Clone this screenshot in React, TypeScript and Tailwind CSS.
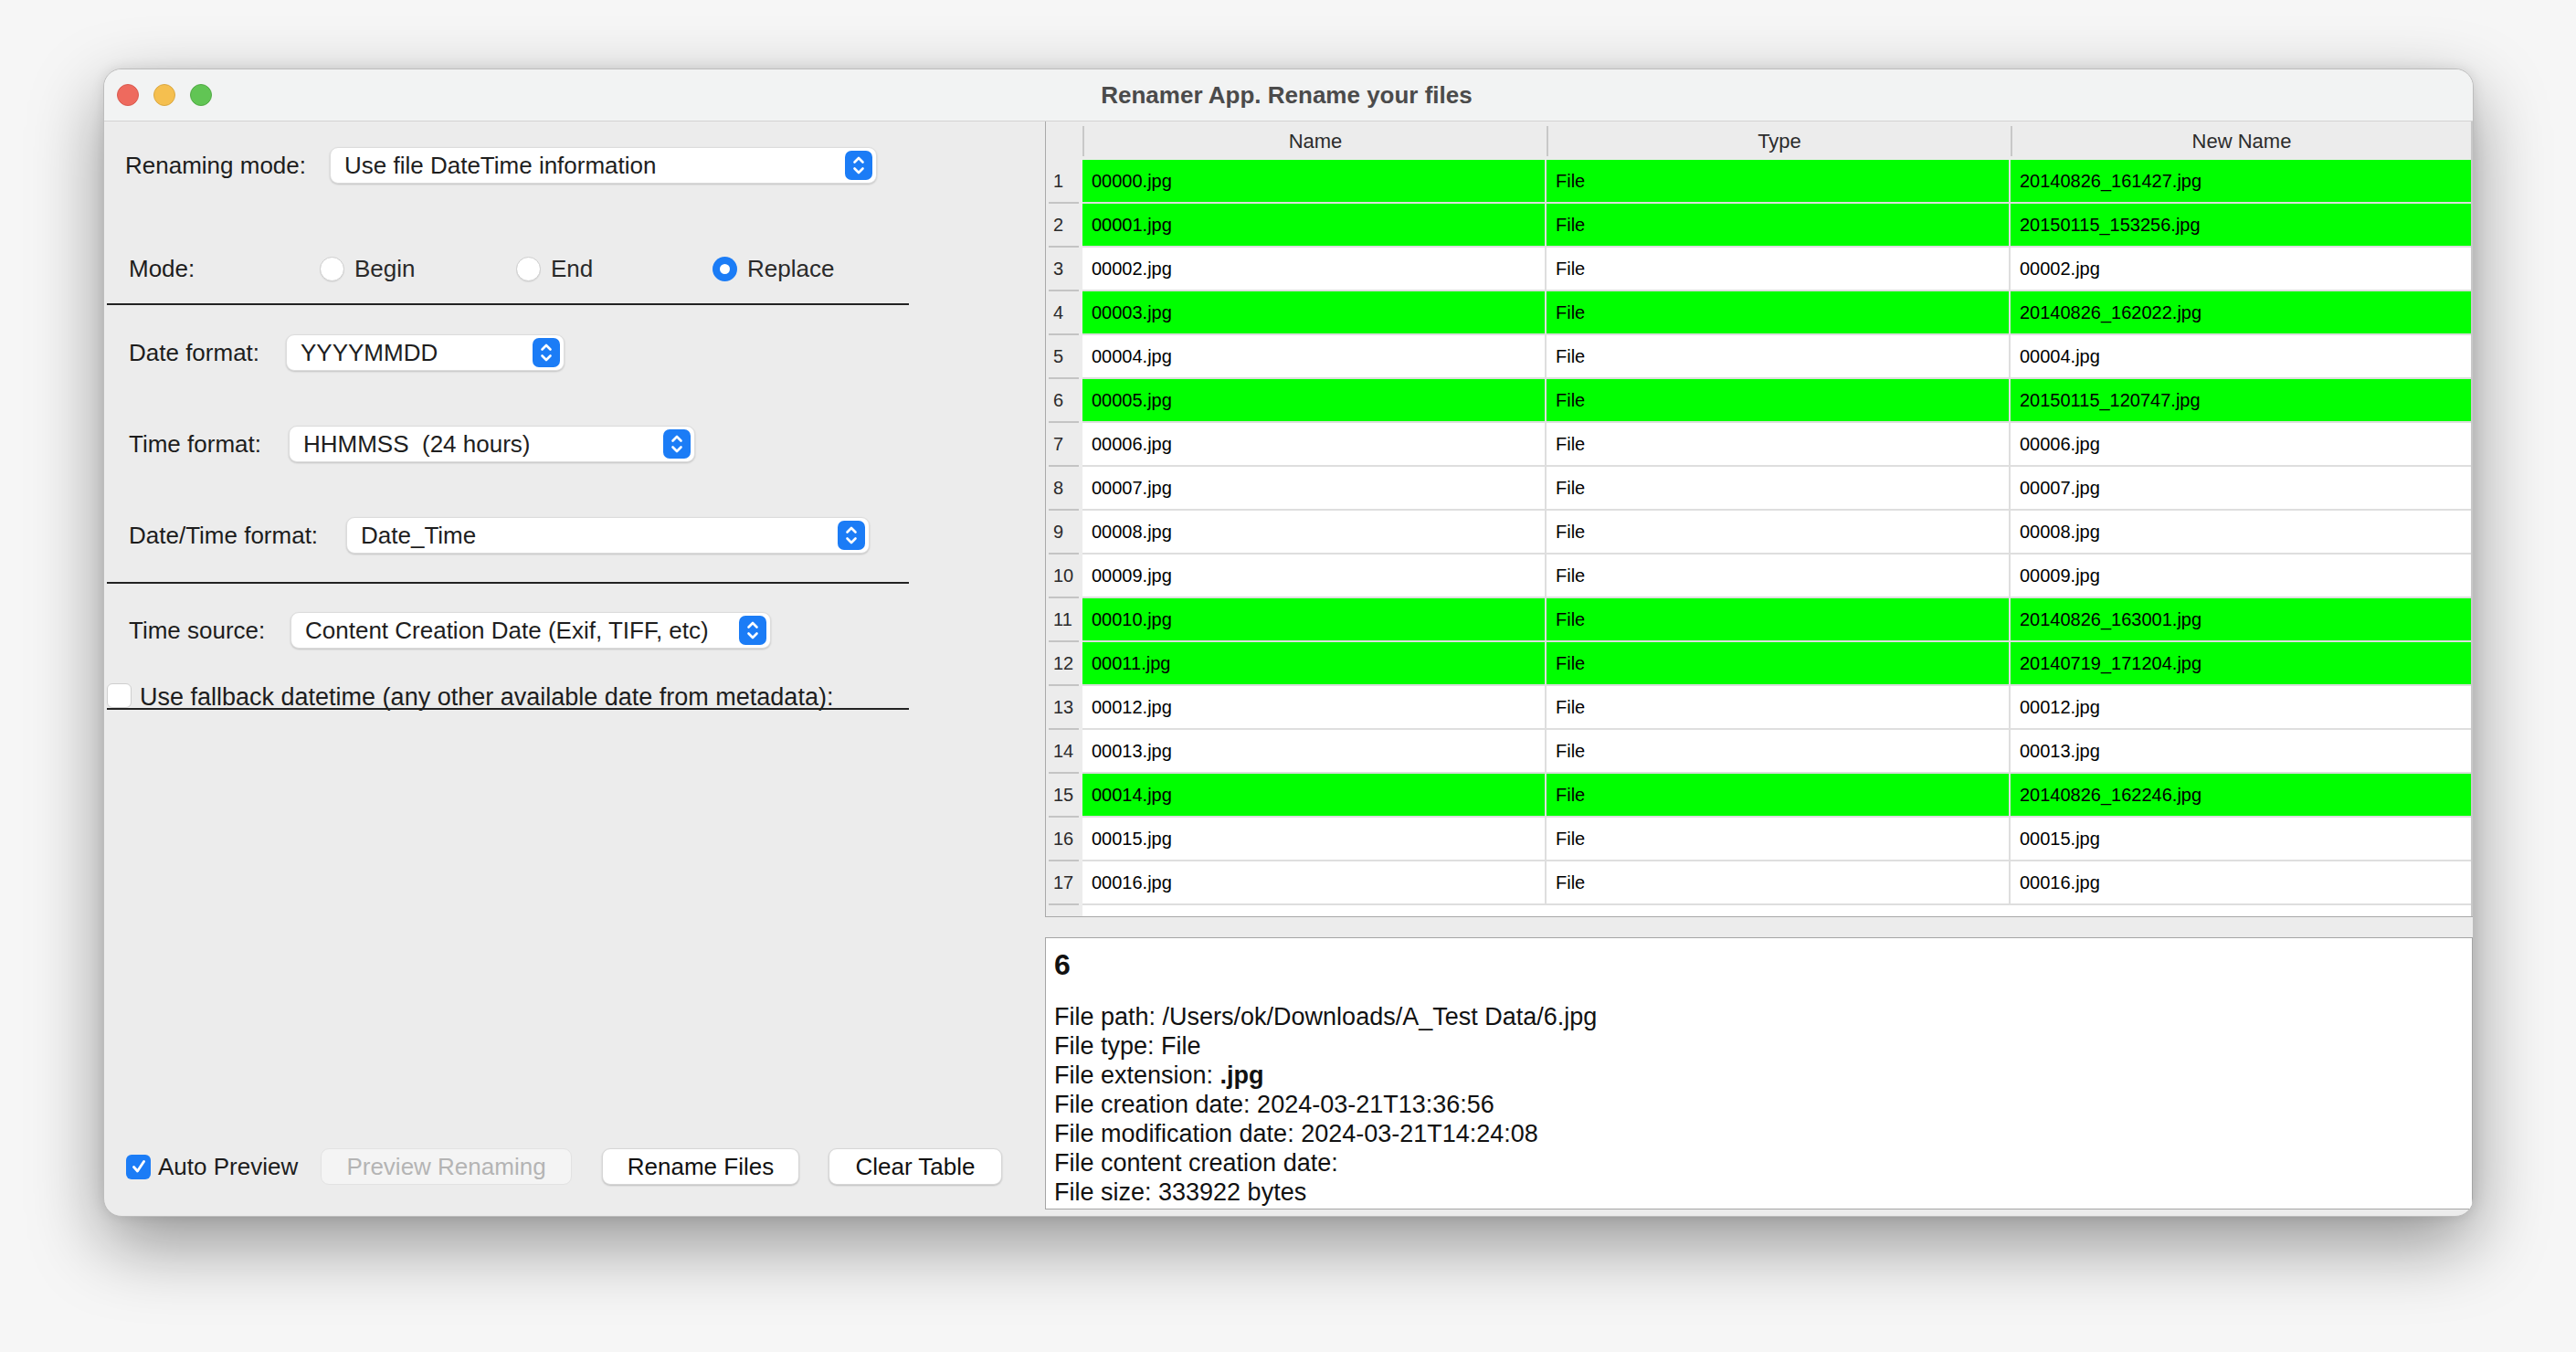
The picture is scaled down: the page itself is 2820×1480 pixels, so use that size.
import React from 'react';

const FONT = { fontFamily: '"Liberation Sans", Arial, sans-serif' };

interface FileRow {
  name: string;
  newName: string;
  matched: boolean;
}

const renamed: Record<number, string> = {
  0: '20140826_161427.jpg',
  1: '20150115_153256.jpg',
  3: '20140826_162022.jpg',
  5: '20150115_120747.jpg',
  10: '20140826_163001.jpg',
  11: '20140719_171204.jpg',
  14: '20140826_162246.jpg',
};

const rows: FileRow[] = Array.from({ length: 17 }, (_, i) => {
  const name = `${String(i).padStart(5, '0')}.jpg`;
  return { name, newName: renamed[i] ?? name, matched: i in renamed };
});

const Stepper = () => (
  <div className="w-[30px] h-[32px] rounded-[7px] bg-[#1b7cf6] flex items-center justify-center shrink-0">
    <svg width="30" height="32" viewBox="0 0 30 32" fill="none">
      <path d="M10.5 12.5 L15 8 L19.5 12.5" stroke="white" strokeWidth="2.6" strokeLinecap="round" strokeLinejoin="round" />
      <path d="M10.5 19.5 L15 24 L19.5 19.5" stroke="white" strokeWidth="2.6" strokeLinecap="round" strokeLinejoin="round" />
    </svg>
  </div>
);

const Select = ({ value, width }: { value: string; width: string }) => (
  <div
    className={`${width} h-[40px] bg-white rounded-[9px] border border-[#dcdcdc] shadow-[0_1px_2px_rgba(0,0,0,0.18)] flex items-center pl-[15px] pr-[4px]`}
  >
    <span className="flex-1 text-[26px] text-[#1e1e1e] whitespace-pre leading-none">{value}</span>
    <Stepper />
  </div>
);

const Radio = ({ checked }: { checked?: boolean }) =>
  checked ? (
    <div className="w-[27px] h-[27px] rounded-full bg-[#1b7cf6] flex items-center justify-center shrink-0">
      <div className="w-[11px] h-[11px] rounded-full bg-white" />
    </div>
  ) : (
    <div className="w-[27px] h-[27px] rounded-full bg-white border border-[#cdcdcd] shadow-[0_1px_1px_rgba(0,0,0,0.08)] shrink-0" />
  );

const Checkbox = ({ checked }: { checked?: boolean }) =>
  checked ? (
    <div className="w-[27px] h-[27px] rounded-[6px] bg-[#1b7cf6] flex items-center justify-center shrink-0">
      <svg width="20" height="20" viewBox="0 0 20 20" fill="none">
        <path d="M4.5 10.5 L8.5 15 L15.5 4.5" stroke="white" strokeWidth="2.8" strokeLinecap="round" strokeLinejoin="round" />
      </svg>
    </div>
  ) : (
    <div className="w-[27px] h-[27px] rounded-[6px] bg-white border border-[#cfcfcf] shrink-0" />
  );

const Button = ({ label, width, disabled }: { label: string; width: string; disabled?: boolean }) => (
  <div
    className={`${width} h-[40px] rounded-[9px] flex items-center justify-center text-[26px] ${
      disabled
        ? 'bg-[#f4f4f4] text-[#b4b4b4] border border-[#e2e2e2]'
        : 'bg-white text-[#111] border border-[#d6d6d6] shadow-[0_1px_2px_rgba(0,0,0,0.2)]'
    }`}
  >
    {label}
  </div>
);

const Label = ({ text, width }: { text: string; width: string }) => (
  <span className={`${width} shrink-0 text-[26px] text-[#1d1d1d] leading-none`}>{text}</span>
);

const LeftPanel = () => (
  <div className="w-[1030px] shrink-0 flex flex-col">
    <div className="mt-[28px] h-[40px] pl-[23px] flex items-center">
      <Label text="Renaming mode:" width="w-[224px]" />
      <Select value="Use file DateTime information" width="w-[599px]" />
    </div>

    <div className="mt-[73px] h-[40px] pl-[27px] flex items-center">
      <Label text="Mode:" width="w-[209px]" />
      {['Begin', 'End', 'Replace'].map((m) => (
        <div key={m} className="w-[215px] flex items-center gap-[11px]">
          <Radio checked={m === 'Replace'} />
          <span className="text-[26px] text-[#2a2a2a] leading-none">{m}</span>
        </div>
      ))}
    </div>

    <div className="mt-[18px] ml-[3px] w-[878px] h-[2px] bg-[#222]" />

    <div className="mt-[32px] h-[40px] pl-[27px] flex items-center">
      <Label text="Date format:" width="w-[172px]" />
      <Select value="YYYYMMDD" width="w-[305px]" />
    </div>

    <div className="mt-[60px] h-[40px] pl-[27px] flex items-center">
      <Label text="Time format:" width="w-[175px]" />
      <Select value="HHMMSS  (24 hours)" width="w-[445px]" />
    </div>

    <div className="mt-[60px] h-[40px] pl-[27px] flex items-center">
      <Label text="Date/Time format:" width="w-[238px]" />
      <Select value="Date_Time" width="w-[573px]" />
    </div>

    <div className="mt-[31px] ml-[3px] w-[878px] h-[2px] bg-[#222]" />

    <div className="mt-[31px] h-[40px] pl-[27px] flex items-center">
      <Label text="Time source:" width="w-[177px]" />
      <Select value="Content Creation Date (Exif, TIFF, etc)" width="w-[526px]" />
    </div>

    <div className="mt-[38px] ml-[3px] w-[878px] h-[29px] border-b-2 border-[#222] flex items-start gap-[9px]">
      <Checkbox />
      <span className="text-[27px] text-[#1d1d1d] leading-[30px]">
        Use fallback datetime (any other available date from metadata):
      </span>
    </div>

    <div className="mt-auto mb-[34px] pl-[24px] flex items-center">
      <div className="w-[213px] flex items-center gap-[8px]">
        <Checkbox checked />
        <span className="text-[26px] text-[#1d1d1d] leading-none">Auto Preview</span>
      </div>
      <Button label="Preview Renaming" width="w-[275px]" disabled />
      <div className="w-[33px]" />
      <Button label="Rename Files" width="w-[216px]" />
      <div className="w-[32px]" />
      <Button label="Clear Table" width="w-[190px]" />
    </div>
  </div>
);

const HeaderCell = ({ label, width }: { label: string; width: string }) => (
  <div className={`${width} h-full flex items-center`}>
    <div className="w-[2px] h-[33px] bg-[#c8c8c8]" />
    <span className="flex-1 text-center text-[22px] text-[#2c2c2c]">{label}</span>
  </div>
);

const FileTable = () => (
  <div className="h-[871px] border-l border-b border-[#a9a9a9] bg-[#ececec] flex flex-col overflow-hidden">
    <div className="h-[42px] flex shrink-0">
      <div className="w-[40px] shrink-0" />
      <HeaderCell label="Name" width="w-[508px]" />
      <HeaderCell label="Type" width="w-[508px]" />
      <HeaderCell label="New Name" width="flex-1" />
      <div className="w-[2px] h-full bg-[#c8c8c8]" />
    </div>
    {rows.map((r, i) => {
      const bg = r.matched ? 'bg-[#00ff00]' : 'bg-white';
      return (
        <div key={r.name} className="h-[48px] flex shrink-0 text-[20px] text-black">
          <div className="w-[40px] shrink-0 flex flex-col">
            <div className="flex-1 flex items-center pl-[8px] text-[#2b2b2b]">{i + 1}</div>
            <div className="ml-[3px] w-[33px] h-[2px] bg-[#c4c4c4]" />
          </div>
          <div className={`w-[508px] ${bg} border-r-2 border-b-2 border-[#dedede] flex items-center pl-[10px]`}>
            {r.name}
          </div>
          <div className={`w-[508px] ${bg} border-r-2 border-b-2 border-[#dedede] flex items-center pl-[10px]`}>
            File
          </div>
          <div className={`flex-1 ${bg} border-b-2 border-[#dedede] flex items-center pl-[10px]`}>{r.newName}</div>
          <div className="w-[2px] bg-[#c8c8c8]" />
        </div>
      );
    })}
    <div className="flex-1 flex">
      <div className="w-[40px] shrink-0" />
      <div className="flex-1 bg-white" />
      <div className="w-[2px] bg-[#c8c8c8]" />
    </div>
  </div>
);

const Details = () => (
  <div className="mt-[22px] mb-[7px] flex-1 bg-white border border-[#a5a5a5] pl-[9px] pt-[10px] text-[#111]">
    <div className="text-[32px] font-bold leading-[38px]">6</div>
    <div className="mt-[22px] text-[27px] leading-[32px]">
      <div>File path: /Users/ok/Downloads/A_Test Data/6.jpg</div>
      <div>File type: File</div>
      <div>
        File extension: <span className="font-bold">.jpg</span>
      </div>
      <div>File creation date: 2024-03-21T13:36:56</div>
      <div>File modification date: 2024-03-21T14:24:08</div>
      <div>File content creation date:</div>
      <div>File size: 333922 bytes</div>
    </div>
  </div>
);

export default function App() {
  return (
    <div className="w-[2820px] h-[1480px] bg-[#f6f6f6] pl-[113px] pt-[75px]" style={FONT}>
      <div className="w-[2595px] h-[1257px] rounded-[20px] border border-[#bdbdbd] bg-[#ececec] overflow-hidden flex flex-col shadow-[0_30px_80px_rgba(0,0,0,0.4),0_0_14px_rgba(0,0,0,0.1)]">
        <div className="h-[57px] shrink-0 bg-[#f2f3f3] border-b border-[#d3d3d3] grid grid-cols-[1fr_auto_1fr] items-center">
          <div className="flex items-center gap-[16px] pl-[14px]">
            <div className="w-[24px] h-[24px] rounded-full bg-[#ee6a5e] border border-[#d85a4f]" />
            <div className="w-[24px] h-[24px] rounded-full bg-[#f5bf4f] border border-[#d9a740]" />
            <div className="w-[24px] h-[24px] rounded-full bg-[#61c554] border border-[#52a945]" />
          </div>
          <div className="text-[26px] font-bold text-[#4b4b4b] -ml-[4px]">Renamer App. Rename your files</div>
          <div />
        </div>
        <div className="flex-1 flex">
          <LeftPanel />
          <div className="flex-1 flex flex-col">
            <FileTable />
            <Details />
          </div>
        </div>
      </div>
    </div>
  );
}
